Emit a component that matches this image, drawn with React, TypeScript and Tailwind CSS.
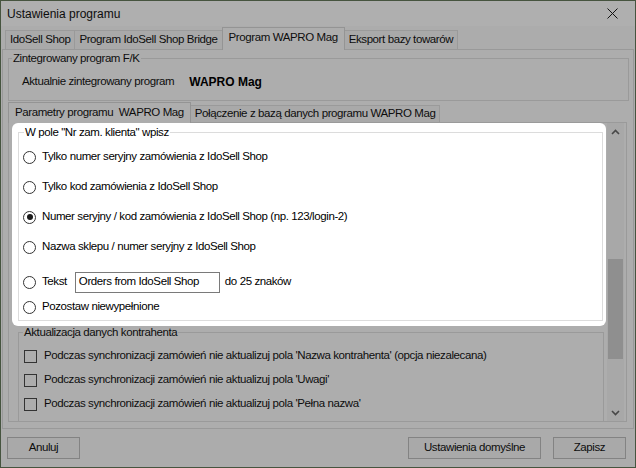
import React from "react";

const RADIOS = [
  "Tylko numer seryjny zamówienia z IdoSell Shop",
  "Tylko kod zamówienia z IdoSell Shop",
  "Numer seryjny / kod zamówienia z IdoSell Shop (np. 123/login-2)",
  "Nazwa sklepu / numer seryjny z IdoSell Shop",
];

const CHECKS = [
  "Podczas synchronizacji zamówień nie aktualizuj pola 'Nazwa kontrahenta' (opcja niezalecana)",
  "Podczas synchronizacji zamówień nie aktualizuj pola 'Uwagi'",
  "Podczas synchronizacji zamówień nie aktualizuj pola 'Pełna nazwa'",
];

function Radio({ checked }: { checked?: boolean }) {
  return (
    <span className="flex h-[13px] w-[13px] shrink-0 items-center justify-center rounded-full border border-[#333] bg-white">
      {checked && <span className="h-[6px] w-[6px] rounded-full bg-[#1a1a1a]" />}
    </span>
  );
}

function Tab({ label, active, first }: { label: string; active?: boolean; first?: boolean }) {
  if (active) {
    return (
      <div className="relative z-10 -mb-px -ml-px flex h-[23px] items-center whitespace-pre border border-b-0 border-[#949494] bg-[#adadad] px-[6px] pb-[2px]">
        {label}
      </div>
    );
  }
  return (
    <div
      className={`flex h-[19px] items-center whitespace-pre border border-b-0 border-[#9a9a9a] bg-[#a9a9a9] px-[4px] ${
        first ? "" : "-ml-px"
      }`}
    >
      {label}
    </div>
  );
}

function InnerTab({ label, active }: { label: string; active?: boolean }) {
  if (active) {
    return (
      <div className="relative z-10 -mb-px flex h-[21px] items-center whitespace-pre border border-b-0 border-[#949494] bg-[#adadad] px-[6px] pb-[1px]">
        {label}
      </div>
    );
  }
  return (
    <div className="-ml-px flex h-[17px] items-center whitespace-pre border border-b-0 border-[#9a9a9a] bg-[#a9a9a9] px-[4px]">
      {label}
    </div>
  );
}

function Chevron({ up }: { up?: boolean }) {
  return (
    <svg width="9" height="6" viewBox="0 0 9 6">
      <polyline
        points={up ? "1,5 4.5,1.5 8,5" : "1,1 4.5,4.5 8,1"}
        fill="none"
        stroke="#474747"
        strokeWidth="1.6"
      />
    </svg>
  );
}

export default function App() {
  return (
    <div className="flex h-[468px] w-[636px] flex-col border border-[#46543f] bg-[#acacac] font-['Liberation_Sans',Arial,sans-serif] text-[11.5px] tracking-[-0.4px] text-[#0d0d0d]">
      {/* Title bar */}
      <div className="flex h-[25px] shrink-0 items-center justify-between bg-[#afafaf] pl-[6px]">
        <span className="text-[12px] tracking-normal">Ustawienia programu</span>
        <div className="flex h-[25px] w-[46px] items-center justify-center">
          <svg width="11" height="11" viewBox="0 0 11 11">
            <path d="M0.5 0.5 L10.5 10.5 M10.5 0.5 L0.5 10.5" stroke="#111" strokeWidth="1" />
          </svg>
        </div>
      </div>

      {/* Main tabs */}
      <div className="flex h-[23px] shrink-0 items-end pl-[4px]">
        <Tab label="IdoSell Shop" first />
        <Tab label="Program IdoSell Shop Bridge" />
        <Tab label="Program WAPRO Mag" active />
        <Tab label="Eksport bazy towarów" />
      </div>

      {/* Tab page */}
      <div className="mx-[1px] flex h-[380px] shrink-0 flex-col border border-[#999] bg-[#adadad]">
        <fieldset className="ml-[5px] mr-[4px] mt-[2px] border border-[#9a9a9a]">
          <legend className="ml-[3px] px-[1px] leading-[13px]">Zintegrowany program F/K</legend>
          <div className="mt-[9px] mb-[10px] flex h-[16px] items-center gap-[15px] pl-[13px]">
            <span>Aktualnie zintegrowany program</span>
            <span className="text-[12px] font-bold tracking-normal text-black">WAPRO Mag</span>
          </div>
        </fieldset>

        {/* Inner tabs */}
        <div className="ml-[5px] flex h-[21px] items-end">
          <InnerTab label="Parametry programu  WAPRO Mag" active />
          <InnerTab label="Połączenie z bazą danych programu WAPRO Mag" />
        </div>

        <div className="ml-[5px] mr-[6px] flex h-[300px] overflow-hidden border border-[#9a9a9a]">
          <div className="flex flex-1 flex-col">
            {/* Highlighted white section */}
            <div className="ml-[3px] mr-[1px] h-[203px] shrink-0 overflow-hidden rounded-[6px] bg-white pt-[3px] text-black">
              <fieldset className="ml-[6px] mr-[3px] border border-[#dcdcdc]">
                <legend className="ml-[5px] px-[1px] leading-[13px]">W pole "Nr zam. klienta" wpisz</legend>
                <div className="flex flex-col pl-[4px] pt-[3px]">
                  {RADIOS.map((r, i) => (
                    <div key={r} className="flex h-[30px] items-center gap-[6px]">
                      <Radio checked={i === 2} />
                      <span>{r}</span>
                    </div>
                  ))}
                  <div className="mt-[8px] flex h-[24px] items-center gap-[6px]">
                    <Radio />
                    <span>Tekst</span>
                    <div className="ml-[2px] flex h-[21px] w-[145px] items-center border border-[#7a7a7a] pl-[3px]">
                      Orders from IdoSell Shop
                    </div>
                    <span className="-ml-px">do 25 znaków</span>
                  </div>
                  <div className="flex h-[26px] items-center gap-[6px]">
                    <Radio />
                    <span>Pozostaw niewypełnione</span>
                  </div>
                </div>
              </fieldset>
            </div>

            <fieldset className="ml-[9px] mr-[3px] border border-[#9a9a9a]">
              <legend className="ml-[4px] px-[1px] leading-[13px]">Aktualizacja danych kontrahenta</legend>
              <div className="flex flex-col pb-[10px] pl-[5px] pt-[5px]">
                {CHECKS.map((c) => (
                  <div key={c} className="flex h-[24px] items-center gap-[7px]">
                    <span className="h-[13px] w-[13px] shrink-0 border border-[#333]" />
                    <span>{c}</span>
                  </div>
                ))}
              </div>
            </fieldset>
          </div>

          {/* Scrollbar */}
          <div className="mr-[2px] flex w-[17px] flex-col bg-[#a8a8a8]">
            <div className="flex h-[17px] items-center justify-center">
              <Chevron up />
            </div>
            <div className="mx-[1px] mt-[119px] h-[100px] bg-[#8f8f8f]" />
            <div className="flex-1" />
            <div className="flex h-[17px] items-center justify-center">
              <Chevron />
            </div>
          </div>
        </div>
      </div>

      {/* Buttons */}
      <div className="flex flex-1 items-start justify-between pl-[6px] pr-[9px] pt-[8px]">
        <button className="flex h-[22px] w-[73px] items-center justify-center border border-[#838383] bg-[#a9a9a9]">
          Anuluj
        </button>
        <div className="flex gap-[12px]">
          <button className="flex h-[22px] w-[133px] items-center justify-center border border-[#838383] bg-[#a9a9a9]">
            Ustawienia domyślne
          </button>
          <button className="flex h-[22px] w-[73px] items-center justify-center border border-[#838383] bg-[#a9a9a9]">
            Zapisz
          </button>
        </div>
      </div>
    </div>
  );
}
